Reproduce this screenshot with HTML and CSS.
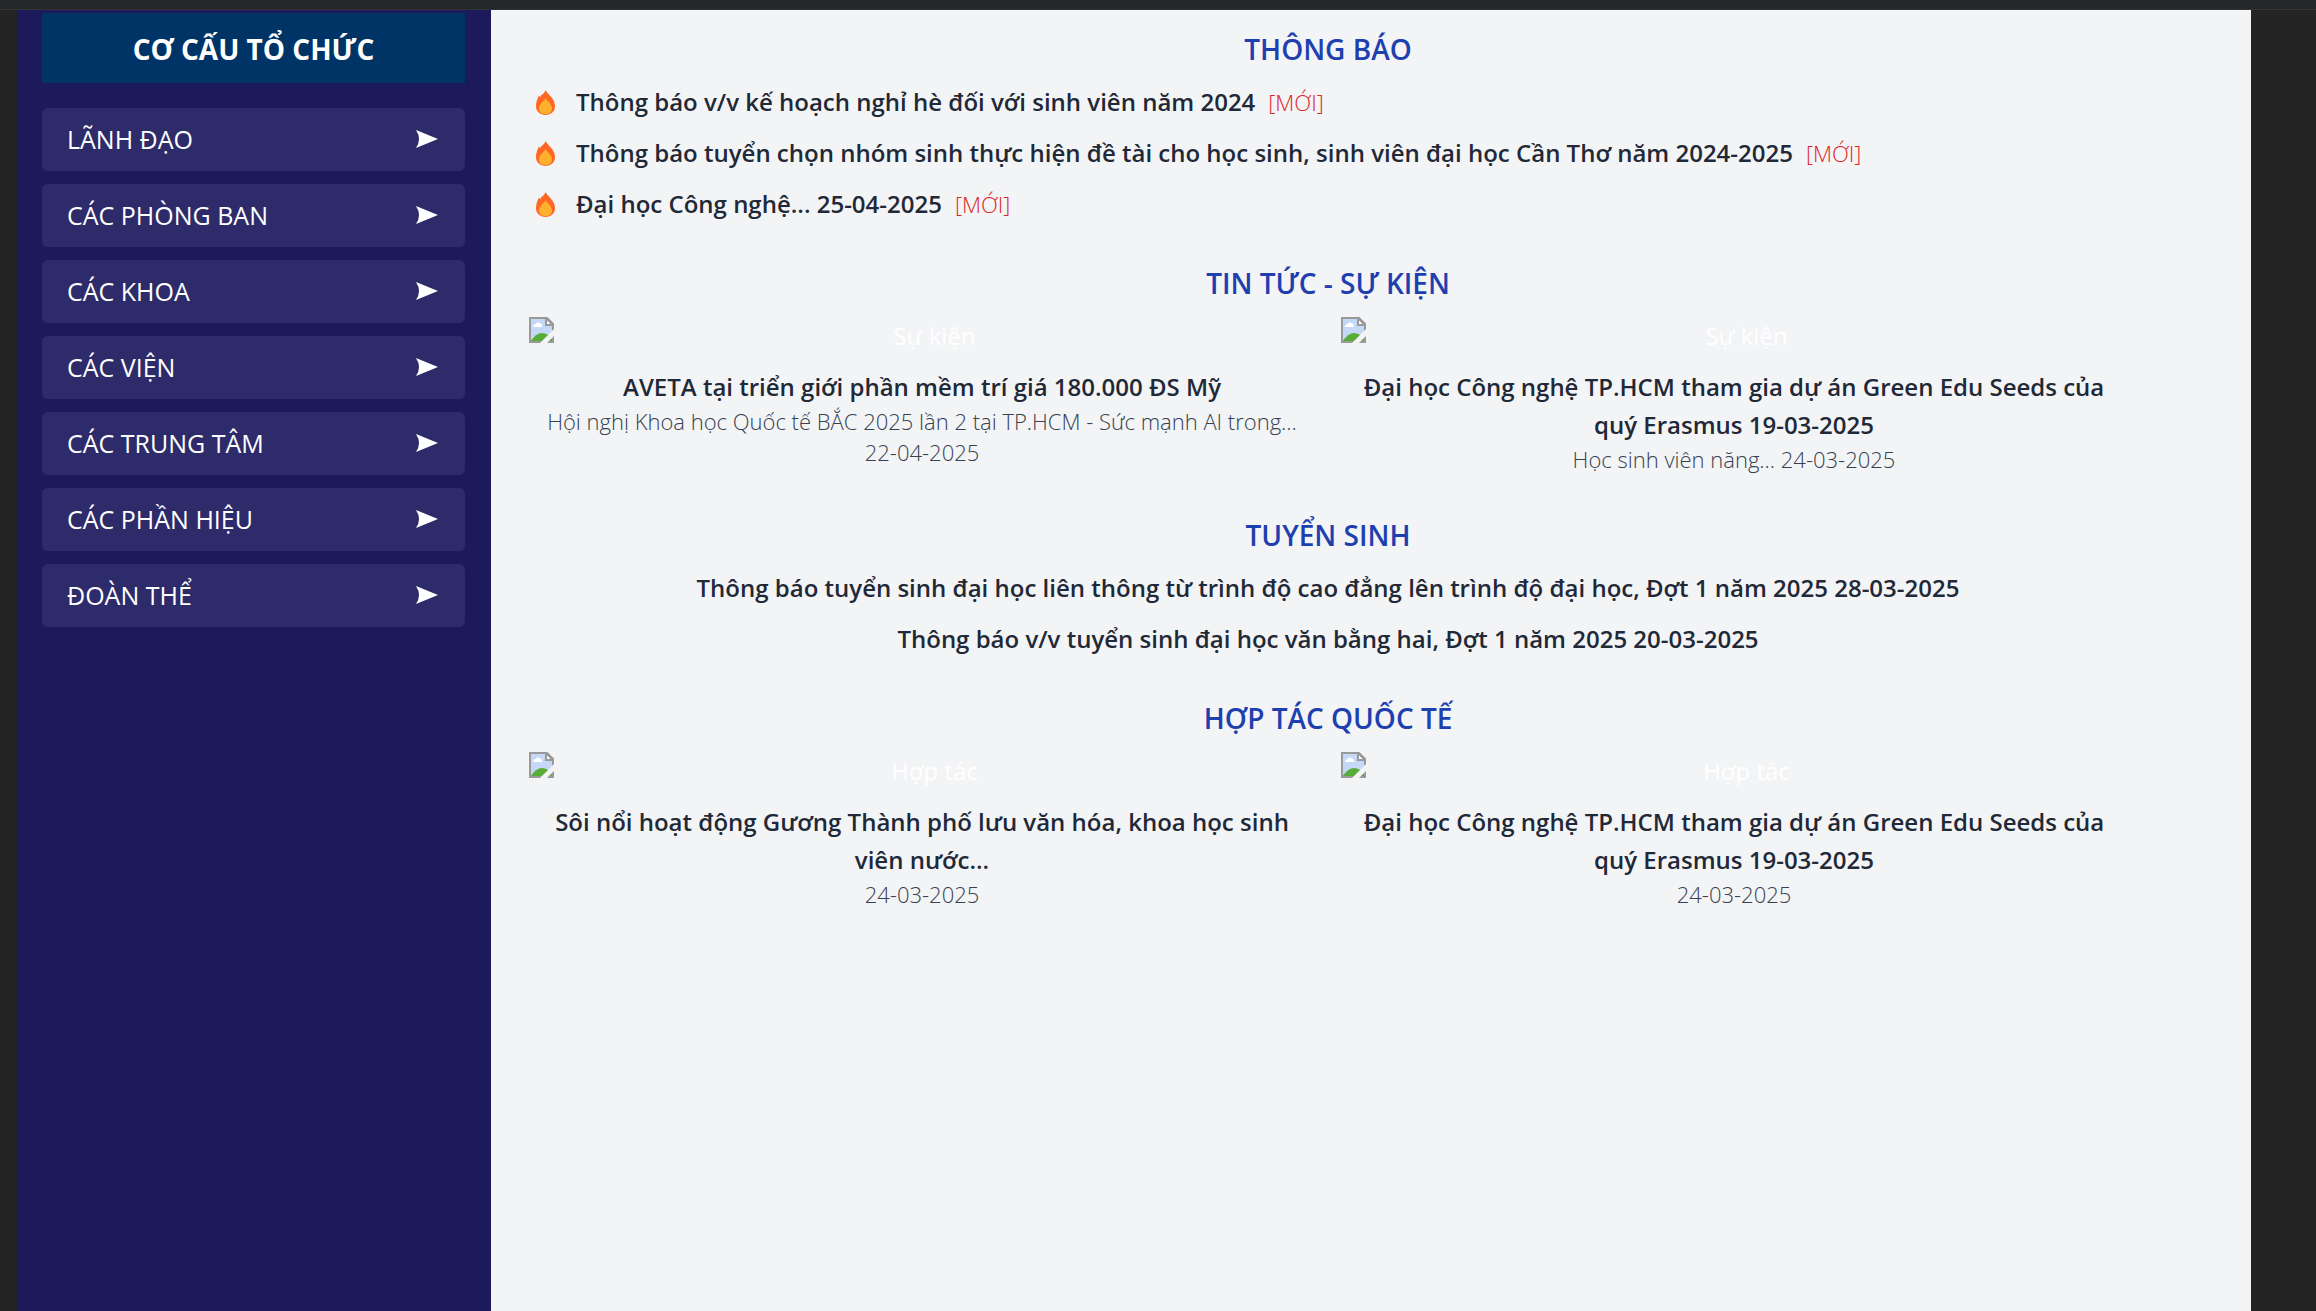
FILE: index.html
```html
<!DOCTYPE html>
<html lang="vi">
<head>
<meta charset="utf-8">
<meta name="viewport" content="width=device-width, initial-scale=1">
<title>Cơ cấu tổ chức</title>
<link rel="stylesheet" href="styles.css">
</head>
<body>
<svg class="defs" aria-hidden="true">
  <symbol id="arrow" viewBox="0 0 22 18"><path d="M0 0 22 9 0 18Q6 9 0 0Z" fill="#fff"/></symbol>
  <symbol id="flame" viewBox="0 0 19 25">
    <path d="M9.600 0C11 4 19 8 19 16C19 21.500 15 25 9.500 25C4 25 0 21.500 0 16C0 11.500 1.500 8.500 3 5.500L4.200 7.200L5.300 5C7 4.500 9 2 9.600 0Z" fill="#ff6723"/>
    <path d="M9.600 8C10.500 11 16 13.500 16 18.500C16 22 13.500 24.200 9.500 24.200C5.500 24.200 3 22 3 18.500C3 13.500 8.500 11 9.600 8Z" fill="#ffb02e"/>
  </symbol>
  <symbol id="broken" viewBox="0 0 25 26">
    <path d="M1 1H18L24 7V25H1Z" fill="#c5d8f7"/>
    <path d="M4 10Q4 7 7 7Q8 4 10 6Q13 6 13 10Z" fill="#fff"/>
    <path d="M1 25Q7 16 13 16Q19 16 24 23V25Z" fill="#58ad38"/>
    <path d="M1 1H18L24 7V25H1Z" fill="none" stroke="#999" stroke-width="2"/>
    <path d="M17 1V8H24Z" fill="#fff" stroke="#999" stroke-width="2"/>
    <path d="M11 26 25 12V19L18 26Z" fill="#f3f4f6"/>
  </symbol>
</svg>
<div class="topbar"></div>
<div class="page">
  <aside class="sidebar">
    <h2 class="sidebar-title">CƠ CẤU TỔ CHỨC</h2>
    <nav class="menu">
      <button class="menu-item" type="button">LÃNH ĐẠO<svg class="arrow"><use href="#arrow"/></svg></button>
      <button class="menu-item" type="button">CÁC PHÒNG BAN<svg class="arrow"><use href="#arrow"/></svg></button>
      <button class="menu-item" type="button">CÁC KHOA<svg class="arrow"><use href="#arrow"/></svg></button>
      <button class="menu-item" type="button">CÁC VIỆN<svg class="arrow"><use href="#arrow"/></svg></button>
      <button class="menu-item" type="button">CÁC TRUNG TÂM<svg class="arrow"><use href="#arrow"/></svg></button>
      <button class="menu-item" type="button">CÁC PHẦN HIỆU<svg class="arrow"><use href="#arrow"/></svg></button>
      <button class="menu-item" type="button">ĐOÀN THỂ<svg class="arrow"><use href="#arrow"/></svg></button>
    </nav>
  </aside>
  <main class="content">
    <section class="section">
      <h2 class="heading">THÔNG BÁO</h2>
      <ul class="list">
        <li class="notice"><svg class="flame"><use href="#flame"/></svg><a class="link" href="#">Thông báo v/v kế hoạch nghỉ hè đối với sinh viên năm 2024</a><span class="new">[MỚI]</span></li>
        <li class="notice"><svg class="flame"><use href="#flame"/></svg><a class="link" href="#">Thông báo tuyển chọn nhóm sinh thực hiện đề tài cho học sinh, sinh viên đại học Cần Thơ năm 2024-2025</a><span class="new">[MỚI]</span></li>
        <li class="notice"><svg class="flame"><use href="#flame"/></svg><a class="link" href="#">Đại học Công nghệ... 25-04-2025</a><span class="new">[MỚI]</span></li>
      </ul>
    </section>
    <section class="section">
      <h2 class="heading">TIN TỨC - SỰ KIỆN</h2>
      <div class="cards">
        <article class="card">
          <div class="image"><svg class="broken"><use href="#broken"/></svg><span class="alt">Sự kiện</span></div>
          <a class="link" href="#">AVETA tại triển giới phần mềm trí giá 180.000 ĐS Mỹ</a>
          <p class="summary">Hội nghị Khoa học Quốc tế BẮC 2025 lần 2 tại TP.HCM - Sức mạnh AI trong... 22-04-2025</p>
        </article>
        <article class="card">
          <div class="image"><svg class="broken"><use href="#broken"/></svg><span class="alt">Sự kiện</span></div>
          <a class="link" href="#">Đại học Công nghệ TP.HCM tham gia dự án Green Edu Seeds của quý Erasmus 19-03-2025</a>
          <p class="summary">Học sinh viên năng... 24-03-2025</p>
        </article>
      </div>
    </section>
    <section class="section">
      <h2 class="heading">TUYỂN SINH</h2>
      <ul class="list centered">
        <li><a class="link" href="#">Thông báo tuyển sinh đại học liên thông từ trình độ cao đẳng lên trình độ đại học, Đợt 1 năm 2025 28-03-2025</a></li>
        <li><a class="link" href="#">Thông báo v/v tuyển sinh đại học văn bằng hai, Đợt 1 năm 2025 20-03-2025</a></li>
      </ul>
    </section>
    <section class="section">
      <h2 class="heading">HỢP TÁC QUỐC TẾ</h2>
      <div class="cards">
        <article class="card">
          <div class="image"><svg class="broken"><use href="#broken"/></svg><span class="alt">Hợp tác</span></div>
          <a class="link" href="#">Sôi nổi hoạt động Gương Thành phố lưu văn hóa, khoa học sinh viên nước...</a>
          <p class="summary">24-03-2025</p>
        </article>
        <article class="card">
          <div class="image"><svg class="broken"><use href="#broken"/></svg><span class="alt">Hợp tác</span></div>
          <a class="link" href="#">Đại học Công nghệ TP.HCM tham gia dự án Green Edu Seeds của quý Erasmus 19-03-2025</a>
          <p class="summary">24-03-2025</p>
        </article>
      </div>
    </section>
  </main>
</div>
</body>
</html>
```
FILE: styles.css
```css
* { box-sizing: border-box; margin: 0; padding: 0; }
body {
  min-height: 100vh;
  display: flex;
  flex-direction: column;
  background: #242424;
  color: #1f2937;
  font-family: "Open Sans", "Noto Sans", sans-serif;
  font-size: 24px;
  line-height: 38px;
}
.defs { display: none; }
.topbar { height: 10px; background: #242628; border-bottom: 1px solid #333436; }
.page { flex: 1; display: flex; margin: 0 65px 0 17px; }
.sidebar { flex: none; width: 474px; padding: 3px 26px 25px 25px; background: #1c1a5a; color: #fff; }
.sidebar-title {
  margin-bottom: 25px;
  padding: 14px 13px 12px;
  background: #003366;
  font-size: 28px;
  font-weight: 700;
  line-height: 44px;
  text-align: center;
}
.menu { display: flex; flex-direction: column; gap: 13px; }
.menu-item {
  display: flex;
  align-items: center;
  justify-content: space-between;
  height: 63px;
  padding: 0 27px 1px 25px;
  border: 0;
  border-radius: 6px;
  background: #2d2b69;
  color: #fff;
  font: inherit;
  font-size: 25px;
  text-align: left;
  cursor: pointer;
}
.arrow { width: 22px; height: 18px; }
.content {
  flex: 1;
  min-width: 0;
  display: flex;
  flex-direction: column;
  gap: 38px;
  padding: 17px 124px 38px 38px;
  background: #f3f4f6;
}
.heading {
  margin-bottom: 12px;
  color: #1e40af;
  font-size: 28px;
  font-weight: 600;
  line-height: 44px;
  text-align: center;
}
.list { display: flex; flex-direction: column; gap: 13px; list-style: none; }
.centered { text-align: center; }
.notice { display: flex; align-items: center; padding-left: 7px; }
.flame { flex: none; width: 19px; height: 25px; margin-right: 21px; }
.link { color: #1f2937; font-weight: 600; text-decoration: none; }
.new { margin-left: 13px; color: #dc2626; font-size: 22px; font-weight: 300; }
.cards { display: grid; grid-template-columns: 1fr 1fr; gap: 26px; }
.card { text-align: center; }
.image { display: flex; height: 38px; margin-bottom: 13px; color: #fff; }
.broken { flex: none; width: 25px; height: 26px; }
.alt { flex: 1; }
.card .link { display: block; padding: 0 13px; }
.summary { padding: 0 13px; color: #374151; font-size: 22px; font-weight: 300; line-height: 31px; }
```
